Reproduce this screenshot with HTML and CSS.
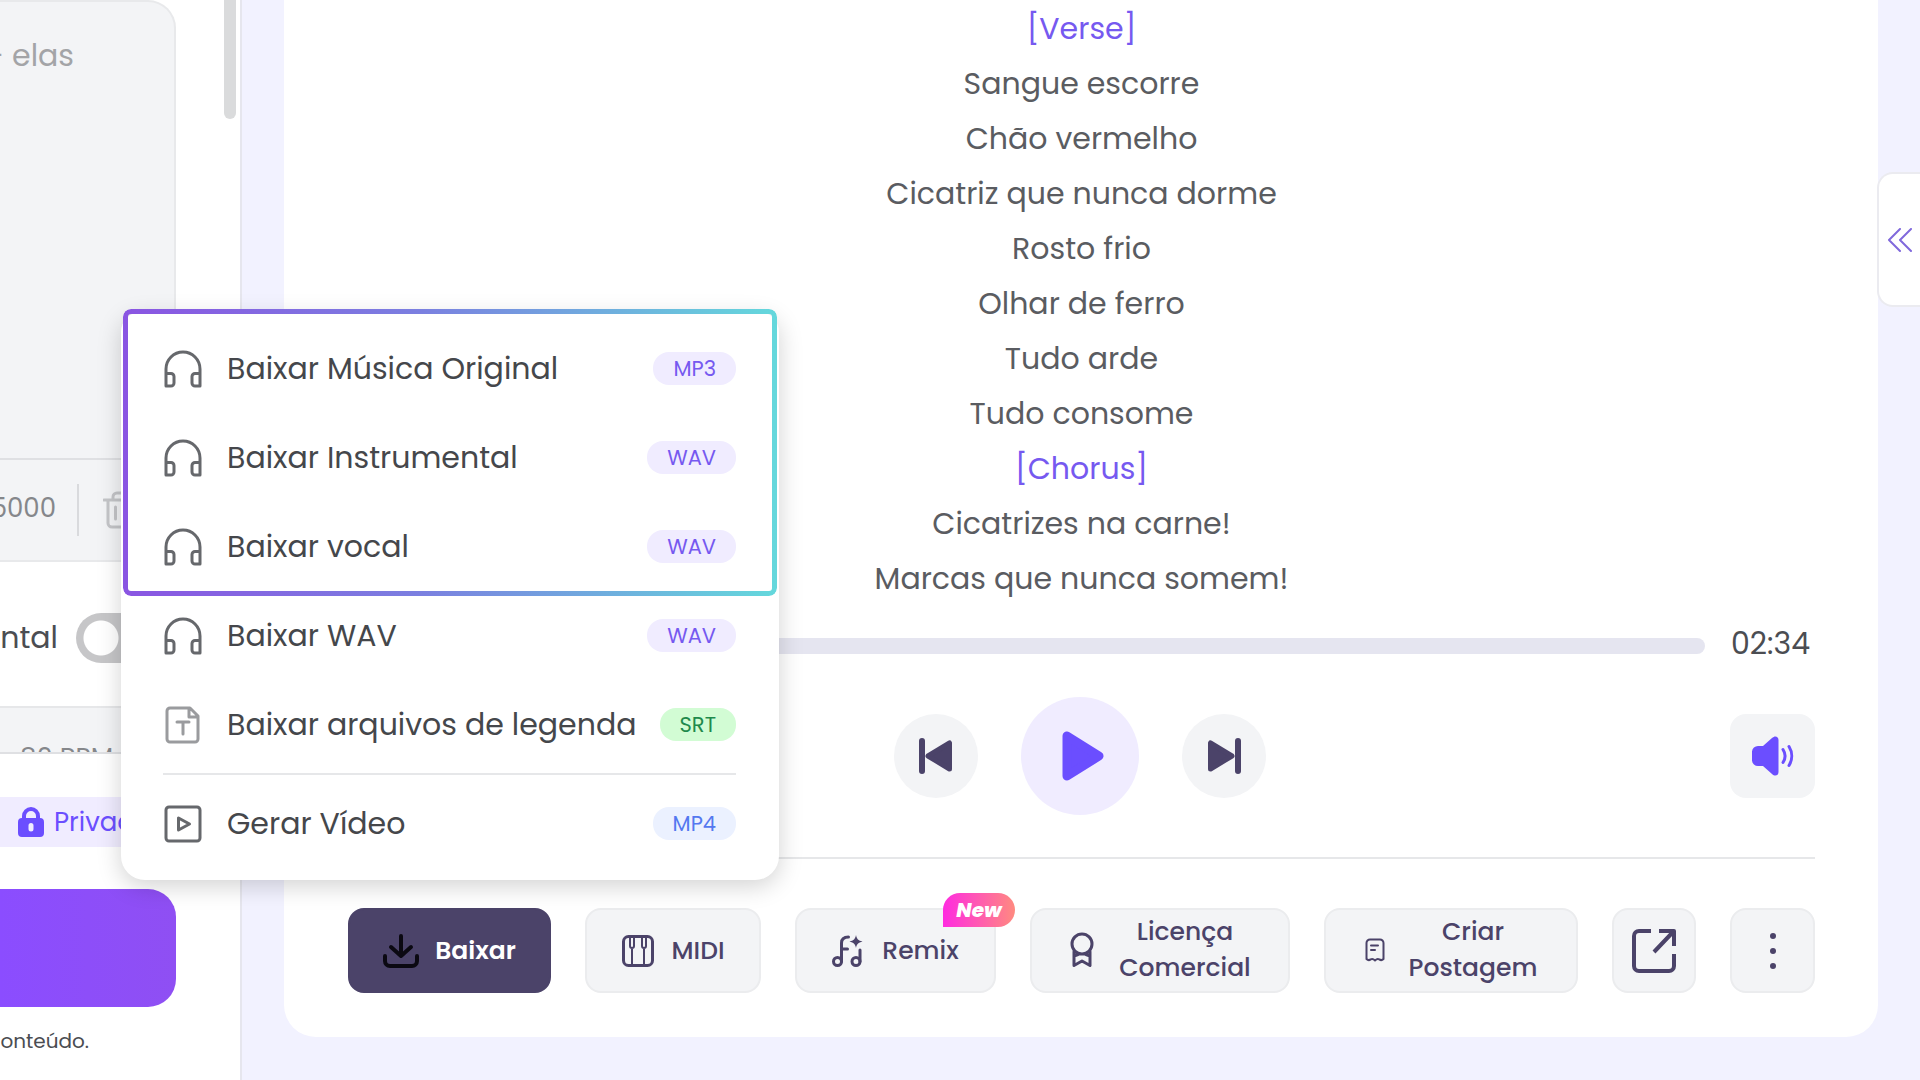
FILE: index.html
```html
<!DOCTYPE html>
<html lang="pt-BR">
<head>
<meta charset="utf-8">
<meta name="viewport" content="width=device-width, initial-scale=1">
<title>Baixar música</title>
<link rel="stylesheet" href="styles.css">
</head>
<body>
<svg class="sprite" aria-hidden="true">
  <symbol id="headphones" viewBox="0 0 40 40"><path d="M3 36V20a17 17 0 0 1 34 0v16M3 24.500h5a3 3 0 0 1 3 3V34a3 3 0 0 1-3 3H3zM37 24.500h-5a3 3 0 0 0-3 3V34a3 3 0 0 0 3 3h5z"/></symbol>
</svg>
<div class="app">
  <aside class="sidebar">
    <div class="prompt">
      <textarea class="prompt-text" aria-label="Letra" placeholder="- elas"></textarea>
      <div class="prompt-tools">
        <span class="counter">5000</span>
        <button class="icon-btn" aria-label="Limpar">
          <svg class="trash" viewBox="0 0 32 38"><path d="M1 9h30M5 9v23a4 4 0 0 0 4 4h14a4 4 0 0 0 4-4V9M10 9V6a4 4 0 0 1 4-4h4a4 4 0 0 1 4 4v3M12.500 16v12M19.500 16v12"/></svg>
        </button>
      </div>
    </div>
    <label class="toggle-row"><span>Instrumental</span><input type="checkbox" class="toggle"></label>
    <div class="tempo"><span>80 BPM</span></div>
    <div class="sidebar-foot">
      <button class="privacy">
        <svg class="lock" viewBox="0 0 26 30"><path class="shackle" d="M6 13V9a7 7 0 0 1 14 0v4"/><path d="M4 11h18a4 4 0 0 1 4 4v11a4 4 0 0 1-4 4H4a4 4 0 0 1-4-4V15a4 4 0 0 1 4-4zm9 5a2.500 2.500 0 0 0-2.500 2.500V22a2.500 2.500 0 0 0 5 0v-3.500A2.500 2.500 0 0 0 13 16z"/></svg>
        <span>Privado</span>
      </button>
      <button class="create" aria-label="Criar"></button>
      <p class="note">conteúdo.</p>
    </div>
    <div class="scroll-thumb"></div>
  </aside>

  <main class="card">
    <div class="lyrics">
      <p class="tag">[Verse]</p>
      <p>Sangue escorre</p>
      <p>Chão vermelho</p>
      <p>Cicatriz que nunca dorme</p>
      <p>Rosto frio</p>
      <p>Olhar de ferro</p>
      <p>Tudo arde</p>
      <p>Tudo consome</p>
      <p class="tag">[Chorus]</p>
      <p>Cicatrizes na carne!</p>
      <p>Marcas que nunca somem!</p>
    </div>
    <div class="timeline">
      <input type="range" class="seek" min="0" max="154" value="0" aria-label="Posição">
      <span class="time">02:34</span>
    </div>
    <div class="controls">
      <div class="transport">
        <button class="round" aria-label="Anterior"><svg class="skip" viewBox="0 0 36 36"><path d="M4 3v30" class="bar"/><path d="M10 18 31.500 5v26z" class="solid"/></svg></button>
        <button class="round play" aria-label="Tocar"><svg class="play-icon" viewBox="0 0 42 50"><path d="M5 5v40L37 25z"/></svg></button>
        <button class="round" aria-label="Próxima"><svg class="skip" viewBox="0 0 36 36"><path d="M32 3v30" class="bar"/><path d="M26 18 4.500 5v26z" class="solid"/></svg></button>
      </div>
      <button class="volume" aria-label="Volume"><svg viewBox="0 0 44 40"><path class="speaker" d="M1 15.500A6 6 0 0 1 7 10h5L21 2c3-3 6.500-1.500 6.500 2v32c0 3.500-3.500 5-6.500 2l-9-8H7a6 6 0 0 1-6-5.500z"/><path class="wave" d="M32 13.500a12 12 0 0 1 0 13M38 10.500a18 18 0 0 1 0 19"/></svg></button>
    </div>
    <hr class="rule">
    <div class="actions">
      <button class="action primary"><svg class="i36" viewBox="0 0 36 36"><path d="M18 3v20M8 14l10 9 10-9M2 23v5a5 5 0 0 0 5 5h22a5 5 0 0 0 5-5v-5"/></svg><span>Baixar</span></button>
      <button class="action"><svg class="i32" viewBox="0 0 32 32"><rect x="1.500" y="1.500" width="29" height="29" rx="5"/><path class="keys" d="M8 2v9a2 2 0 0 0 4 0V2M20 2v9a2 2 0 0 0 4 0V2M10 13v17M22 13v17"/></svg><span>MIDI</span></button>
      <button class="action"><svg class="i32" viewBox="0 0 32 32"><circle cx="5.500" cy="26.500" r="4"/><circle cx="24" cy="26.500" r="4"/><path d="M9.500 26.500V8c0-4 2-6 7-6M9.500 14h6M28 26.500V15"/><path class="spark" d="M24 0c.8 4 2.200 5.500 6.500 6.500C26.200 7.500 24.800 9 24 13c-.8-4-2.200-5.500-6.500-6.500C21.800 5.500 23.200 4 24 0z"/></svg><span>Remix</span><span class="new">New</span></button>
      <button class="action wide"><svg class="award" viewBox="0 0 26 36"><circle cx="13" cy="12" r="10"/><path d="M5 19.500V33.500l8-4.500 8 4.500V19.500M5 24l4-1.500M21 24l-4-1.500"/></svg><span>Licença<br>Comercial</span></button>
      <button class="action wide"><svg class="receipt" viewBox="0 0 20 24"><path d="M1.500 21V5a3.500 3.500 0 0 1 3.500-3.500h10A3.500 3.500 0 0 1 18.500 5v16q-2 2-4.200.4-2.100-1-4.300 1-2.200-2-4.300-1Q3.500 23 1.500 21zM6 7.500h7M6 12h4"/></svg><span>Criar<br>Postagem</span></button>
      <button class="action" aria-label="Abrir"><svg class="open" viewBox="0 0 44 44"><path d="M19 2H7a5 5 0 0 0-5 5v30a5 5 0 0 0 5 5h30a5 5 0 0 0 5-5V25M27 2h15v15M41 3 22 23"/></svg></button>
      <button class="action" aria-label="Mais"><svg class="dots" viewBox="0 0 8 40"><circle cx="4" cy="5" r="3"/><circle cx="4" cy="20" r="3"/><circle cx="4" cy="35" r="3"/></svg></button>
    </div>
  </main>

  <button class="side-tab" aria-label="Expandir"><svg viewBox="0 0 26 24"><path d="M13 1 2 12l11 11M24 1 13 12l11 11"/></svg></button>

  <div class="menu" role="menu">
    <button class="item" role="menuitem"><svg><use href="#headphones"/></svg><span>Baixar Música Original</span><span class="badge">MP3</span></button>
    <button class="item" role="menuitem"><svg><use href="#headphones"/></svg><span>Baixar Instrumental</span><span class="badge">WAV</span></button>
    <button class="item" role="menuitem"><svg><use href="#headphones"/></svg><span>Baixar vocal</span><span class="badge">WAV</span></button>
    <button class="item" role="menuitem"><svg><use href="#headphones"/></svg><span>Baixar WAV</span><span class="badge">WAV</span></button>
    <button class="item" role="menuitem"><svg class="light" viewBox="0 0 40 40"><path d="M7 3h20l8 8v23a3 3 0 0 1-3 3H7a3 3 0 0 1-3-3V6a3 3 0 0 1 3-3M26 3v9h9M14 17h12M20 17v12"/></svg><span>Baixar arquivos de legenda</span><span class="badge green">SRT</span></button>
    <hr class="menu-rule">
    <button class="item" role="menuitem"><svg viewBox="0 0 40 40"><rect x="3" y="3" width="34" height="34" rx="3"/><path d="M15.500 14v12l11-6z"/></svg><span>Gerar Vídeo</span><span class="badge blue">MP4</span></button>
    <div class="highlight"></div>
  </div>
</div>
</body>
</html>
```

FILE: styles.css
```css
* { box-sizing: border-box; }
body {
  margin: 0;
  background: #f2f2ff;
  color: #4b4d52;
  font-family: Poppins, Inter, "Noto Sans", sans-serif;
  font-size: 30px;
}
button { border: 0; padding: 0; background: none; color: inherit; font: inherit; }
p, hr { margin: 0; }
hr { border: 0; height: 2px; background: #e6e7e9; }
svg { display: block; flex: none; fill: none; stroke: currentColor; stroke-width: 3; stroke-linecap: round; stroke-linejoin: round; }
.sprite { position: absolute; width: 0; height: 0; }

.app {
  position: relative;
  display: grid;
  grid-template-columns: 242px 1fr;
  min-height: 100vh;
  overflow: hidden;
}

/* Left column */
.sidebar {
  position: relative;
  display: flex;
  flex-direction: column;
  background: #fff;
  border-right: 2px solid #e6e6ee;
}
.prompt {
  display: flex;
  flex-direction: column;
  height: 562px;
  margin-right: 64px;
  border: 2px solid #e8e9eb;
  border-left: 0;
  border-radius: 0 28px 0 0;
  background: #f3f4f6;
}
.prompt-text {
  flex: 1;
  width: 276px;
  margin-left: -100px;
  padding: 32px 102px 0 0;
  border: 0;
  resize: none;
  background: none;
  font: inherit;
  line-height: 44px;
  text-align: right;
}
.prompt-text::placeholder { color: #a3a4a7; }
.prompt-tools {
  display: flex;
  align-items: center;
  height: 102px;
  border-top: 2px solid #dfe0e3;
  color: #85878b;
  font-size: 26px;
}
.counter {
  display: flex;
  justify-content: flex-end;
  width: 56px;
  line-height: 40px;
  padding-bottom: 4px;
}
.icon-btn { display: flex; align-items: center; height: 52px; margin-left: 21px; padding-left: 24px; border-left: 2px solid #d9dadd; color: #c4c5c8; }
.trash { width: 32px; height: 38px; }
.toggle-row { display: flex; align-items: center; height: 144px; padding-top: 7px; gap: 18px; }
.toggle-row span { display: flex; justify-content: flex-end; width: 58px; flex: none; }
.toggle {
  flex: none;
  width: 88px;
  height: 50px;
  margin: 0;
  appearance: none;
  border-radius: 25px;
  background: radial-gradient(circle at 25px 25px, #fff 17px, #c6c6c8 18px);
}
.tempo {
  height: 46px;
  padding: 34px 0 0 20px;
  overflow: hidden;
  border-top: 2px solid #e6e7e9;
  background: #f3f4f6;
  margin-right: 64px;
  color: #85878b;
  font-size: 26px;
  line-height: 32px;
}
.sidebar-foot { border-top: 2px solid #dfe0e3; padding: 43px 64px 0 0; }
.privacy {
  display: flex;
  align-items: center;
  gap: 10px;
  width: 100%;
  height: 50px;
  padding-left: 18px;
  background: #f0ecff;
  color: #6b4eff;
  font-size: 26px;
}
.lock { width: 26px; height: 30px; fill: currentColor; stroke: none; }
.lock .shackle { fill: none; stroke: currentColor; stroke-width: 4; }
.create {
  display: block;
  width: 100%;
  height: 118px;
  margin-top: 42px;
  border-radius: 0 28px 28px 0;
  background: linear-gradient(90deg, #8b4dff, #8f4ff3);
}
.note { display: flex; justify-content: flex-end; width: 89px; margin-top: 16px; font-size: 20px; line-height: 36px; }
.scroll-thumb { position: absolute; top: 0; right: 4px; width: 12px; height: 119px; border-radius: 0 0 6px 6px; background: #dadbdc; }

/* Player card */
.card {
  display: flex;
  flex-direction: column;
  margin: 0 42px 43px;
  padding: 1px 63px 44px 64px;
  border-radius: 0 0 32px 32px;
  background: #fff;
}
.lyrics { flex: 1; text-align: center; line-height: 55px; color: #5a5c61; }
.lyrics .tag { color: #7659f0; }
.timeline { display: flex; align-items: center; gap: 26px; height: 36px; }
.seek { flex: 1; height: 16px; margin: 0; appearance: none; border-radius: 8px; background: #e5e5f0; }
.seek::-webkit-slider-thumb { appearance: none; width: 16px; height: 16px; border-radius: 8px; background: #6b4eff; }
.time { width: 84px; padding-bottom: 4px; color: #4b4d52; line-height: 32px; }
.controls { display: grid; grid-template-columns: 82px 1fr 85px; align-items: center; margin: 33px 0 42px; }
.transport { grid-column: 2; display: flex; align-items: center; justify-content: center; gap: 43px; }
.round { display: grid; place-items: center; width: 84px; height: 84px; border-radius: 50%; background: #f3f4f6; color: #4b4369; }
.play { width: 118px; height: 118px; background: #f0ecff; color: #6b4eff; }
.skip { width: 36px; height: 36px; }
.skip .bar { stroke-width: 6; }
.skip .solid { fill: currentColor; stroke-width: 5; }
.play-icon { width: 42px; height: 50px; fill: currentColor; stroke-width: 9; margin-left: 6px; }
.volume { display: grid; place-items: center; width: 85px; height: 84px; border-radius: 16px; background: #f3f4f6; color: #6b4eff; }
.volume svg { width: 44px; height: 40px; }
.volume .speaker { fill: currentColor; stroke: none; }
.actions {
  display: grid;
  grid-template-columns: 203fr 176fr 201fr 260fr 254fr 84px 85px;
  gap: 34px;
  margin-top: 49px;
}
.action {
  position: relative;
  display: flex;
  align-items: center;
  justify-content: center;
  gap: 18px;
  height: 85px;
  border: 2px solid #ebecee;
  border-radius: 16px;
  background: #f3f4f6;
  color: #4b4369;
  font-size: 25px;
  font-weight: 500;
  line-height: 36px;
  text-align: center;
}
.wide { gap: 24px; padding-bottom: 2px; }
.primary { border-color: #4b4369; background: #4b4369; color: #fff; font-weight: 600; gap: 16px; }
.primary svg { color: #0b0912; stroke-width: 4; }
.i36 { width: 36px; height: 36px; }
.i32 { width: 32px; height: 32px; }
.keys { stroke-width: 2; }
.spark { fill: currentColor; stroke: none; }
.award { width: 26px; height: 36px; }
.receipt { width: 20px; height: 24px; stroke-width: 2; }
.open { width: 44px; height: 44px; stroke-width: 4; stroke-linecap: butt; }
.dots { width: 8px; height: 40px; fill: currentColor; stroke: none; }
.new {
  position: absolute;
  top: -17px;
  right: -21px;
  width: 72px;
  border-radius: 17px 17px 17px 0;
  background: linear-gradient(90deg, #ff2be0, #ff8a80);
  color: #fff;
  font-size: 20px;
  font-style: italic;
  font-weight: 800;
  line-height: 34px;
}

.side-tab {
  position: absolute;
  top: 172px;
  right: 0;
  display: grid;
  align-items: center;
  width: 43px;
  height: 135px;
  padding-left: 8px;
  border: 2px solid #ebebf0;
  border-right: 0;
  border-radius: 16px 0 0 16px;
  background: #fff;
  color: #8069dc;
}
.side-tab svg { width: 26px; height: 24px; stroke-width: 2; }

/* Download menu */
.menu {
  position: absolute;
  top: 312px;
  left: 121px;
  width: 658px;
  padding: 12px 43px 12px 42px;
  border-radius: 20px 20px 24px 24px;
  background: #fff;
  box-shadow: 0 6px 24px rgba(0, 0, 0, .18);
}
.item { display: flex; align-items: center; width: 100%; height: 89px; gap: 20px; color: #45474b; white-space: nowrap; }
.item svg { width: 40px; height: 40px; margin-right: 4px; color: #66686c; }
.item .light { color: #9a9b9e; }
.badge {
  margin-left: auto;
  padding: 0 20px;
  border-radius: 16px;
  background: #f0ecff;
  color: #7659f0;
  font-size: 21px;
  line-height: 33px;
}
.green { background: #d2fcd4; color: #1f8a4c; }
.blue { background: #ebf1ff; color: #5478f0; }
.menu-rule { margin: 4px 0; }
.highlight {
  position: absolute;
  top: -3px;
  left: 2px;
  width: 654px;
  height: 287px;
  border-radius: 8px;
  padding: 5px;
  pointer-events: none;
  background: linear-gradient(90deg, #8a55e2, #7b7fe0 45%, #64d8dc);
  mask: linear-gradient(#000 0 0) content-box exclude, linear-gradient(#000 0 0);
}
```
